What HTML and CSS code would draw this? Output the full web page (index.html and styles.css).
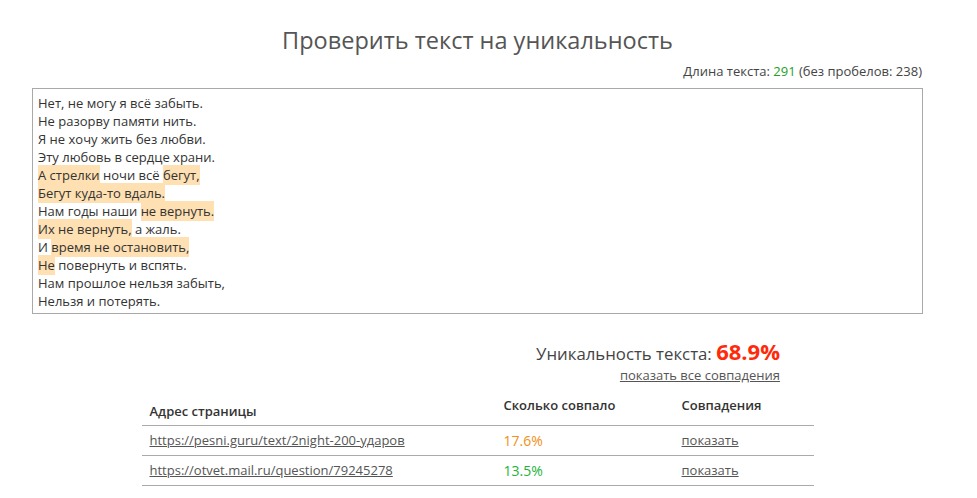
FILE: index.html
```html
<!DOCTYPE html>
<html lang="ru">
<head>
<meta charset="utf-8">
<title>Проверить текст на уникальность</title>
<link rel="stylesheet" href="styles.css">
</head>
<body>
<div class="page">
  <h1 class="title">Проверить текст на уникальность</h1>
  <div class="length">Длина текста: <span class="num">291</span> (без пробелов: 238)</div>
  <div class="textbox">
    <div>Нет, не могу я всё забыть.</div>
    <div>Не разорву памяти нить.</div>
    <div>Я не хочу жить без любви.</div>
    <div>Эту любовь в сердце храни.</div>
    <div><span class="hl">А стрелки</span> ночи всё <span class="hl">бегут,</span></div>
    <div><span class="hl">Бегут куда-то вдаль.</span></div>
    <div>Нам годы наши <span class="hl">не вернуть.</span></div>
    <div><span class="hl">Их не вернуть,</span> а жаль.</div>
    <div>И <span class="hl">время не остановить,</span></div>
    <div><span class="hl">Не</span> повернуть и вспять.</div>
    <div>Нам прошлое нельзя забыть,</div>
    <div>Нельзя и потерять.</div>
  </div>
  <div class="result">
    <div class="uniq">Уникальность текста: <span class="pct">68.9%</span></div>
    <a class="all" href="#">показать все совпадения</a>
  </div>
  <table class="matches">
    <thead>
      <tr>
        <th class="c1 h-low">Адрес страницы</th>
        <th class="c2">Сколько совпало</th>
        <th class="c3">Совпадения</th>
      </tr>
    </thead>
    <tbody>
      <tr>
        <td class="c1"><a href="#">https://pesni.guru/text/2night-200-ударов</a></td>
        <td class="c2 orange">17.6%</td>
        <td class="c3"><a href="#">показать</a></td>
      </tr>
      <tr>
        <td class="c1"><a href="#">https://otvet.mail.ru/question/79245278</a></td>
        <td class="c2 green">13.5%</td>
        <td class="c3"><a href="#">показать</a></td>
      </tr>
    </tbody>
  </table>
</div>
</body>
</html>
```
FILE: styles.css
```css
html, body {
  margin: 0;
  padding: 0;
  background: #fff;
}
body {
  font-family: "Open Sans", "Liberation Sans", sans-serif;
  color: #444;
}
.page {
  width: 891px;
  margin-left: 32px;
  display: flex;
  flex-direction: column;
}
.title {
  margin: 24px 0 0;
  font-size: 23.5px;
  line-height: 32px;
  font-weight: 400;
  color: #555;
  text-align: center;
}
.length {
  margin-top: 7px;
  font-size: 13px;
  line-height: 16px;
  text-align: right;
  color: #444;
  padding-right: 1px;
}
.length .num {
  color: #1e9e1e;
}
.textbox {
  margin-top: 9px;
  border: 1px solid #a9a9a9;
  padding: 5px 5px 3px 5px;
  font-size: 13px;
  line-height: 18px;
  color: #333;
}
.hl {
  background: #ffe0b2;
  padding: 1px 0;
}
.result {
  margin-top: 24px;
  display: flex;
  flex-direction: column;
  align-items: flex-end;
  padding-right: 143px;
}
.uniq {
  font-size: 16.8px;
  line-height: 26px;
  color: #444;
}
.uniq .pct {
  font-size: 22px;
  font-weight: 700;
  color: #ff2a0a;
}
.all {
  margin-top: 0;
  font-size: 13px;
  line-height: 16px;
  color: #555;
  text-decoration: underline;
}
.matches {
  margin: 12px auto 0;
  width: 672px;
  border-collapse: collapse;
  font-size: 13px;
}
.matches th {
  height: 30px;
  padding: 1px 8px 0;
  line-height: 18px;
  text-align: left;
  font-weight: 600;
  color: #333;
  vertical-align: top;
  border-bottom: 1px solid #aaa;
  box-sizing: border-box;
}
.matches th.h-low {
  padding-top: 7px;
}
.matches td {
  height: 30px;
  padding: 0 8px;
  border-bottom: 1px solid #aaa;
  vertical-align: middle;
  box-sizing: border-box;
}
.matches .c1 { width: 354px; }
.matches .c2 { width: 178px; }
.matches .c3 { width: 140px; }
.matches a {
  color: #555;
  text-decoration: underline;
}
.matches td.orange {
  color: #f39016;
  font-size: 14px;
}
.matches td.green {
  color: #23b33a;
  font-size: 14px;
}
```
